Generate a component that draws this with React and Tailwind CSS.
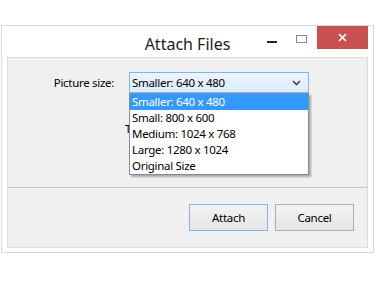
import React from "react";

const options = [
  "Smaller: 640 x 480",
  "Small: 800 x 600",
  "Medium: 1024 x 768",
  "Large: 1280 x 1024",
  "Original Size",
];

const App = () => {
  return (
    <div
      className="w-[375px] h-[281px] bg-white pt-[25px] pl-[1px] text-black"
      style={{ fontFamily: '"Noto Sans", "Segoe UI", sans-serif' }}
    >
      {/* Window */}
      <div className="w-[373px] h-[228px] border border-[#d9d9d9] bg-white px-[5px] pb-[4px] flex flex-col">
        {/* Title bar */}
        <div className="relative h-[31px] shrink-0">
          <div className="text-center text-[16px] leading-[20px] pt-[8px] text-[#222]">
            Attach Files
          </div>
          {/* window controls */}
          <div className="absolute right-0 top-0 flex items-start">
            <div className="w-[10px] h-[2px] bg-[#222] mt-[15px] mr-[19px]" />
            <div className="w-[11px] h-[8px] border border-[#888] mt-[9px] mr-[10px]" />
            <div className="w-[51px] h-[23px] bg-[#c75050] flex items-center justify-center">
              <svg width="9" height="9" viewBox="0 0 9 9">
                <path d="M1 1 L8 8 M8 1 L1 8" stroke="#fff" strokeWidth="1.6" />
              </svg>
            </div>
          </div>
        </div>

        {/* Content */}
        <div className="flex-1 border border-[#dcdcdc] bg-[#f0f0f0] flex flex-col text-[11.5px] tracking-[-0.3px]">
          <div className="relative h-[129px] pt-[14px]">
            <div className="flex items-center">
              <div className="w-[107px] text-right pr-[1px]">Picture size:</div>
              <div className="ml-[14px] w-[180px] h-[21px] border border-[#7eb4ea] bg-gradient-to-b from-[#ecf4fc] to-[#dcecfc] flex items-center justify-between pl-[2px] pr-[7px]">
                <span>Smaller: 640 x 480</span>
                <svg width="9" height="6" viewBox="0 0 9 6">
                  <path d="M1 1 L4.5 4.5 L8 1" stroke="#444" strokeWidth="1.6" fill="none" />
                </svg>
              </div>
            </div>
            <div className="mt-[29px] pl-[117px] leading-[14px]">T</div>

            {/* Open dropdown list */}
            <div className="absolute left-[121px] top-[35px] w-[180px] bg-white border border-[#7a8ea8] shadow-[2px_2px_2px_rgba(0,0,0,0.3)]">
              {options.map((o, i) => (
                <div
                  key={o}
                  className={
                    i === 0
                      ? "h-[16px] leading-[16px] pl-[2px] bg-[#3399ff] text-white"
                      : "h-[16px] leading-[16px] pl-[2px]"
                  }
                >
                  {o}
                </div>
              ))}
            </div>
          </div>

          <div className="h-px bg-[#c8c8c8]" />

          <div className="flex justify-end gap-[7px] pt-[16px] pr-[13px]">
            <button className="w-[79px] h-[27px] border border-[#7eb4ea] bg-gradient-to-b from-[#f2f2f2] to-[#e6e6e6]">
              Attach
            </button>
            <button className="w-[79px] h-[27px] border border-[#adadad] bg-gradient-to-b from-[#f2f2f2] to-[#e6e6e6]">
              Cancel
            </button>
          </div>
        </div>
      </div>
    </div>
  );
};

export default App;
